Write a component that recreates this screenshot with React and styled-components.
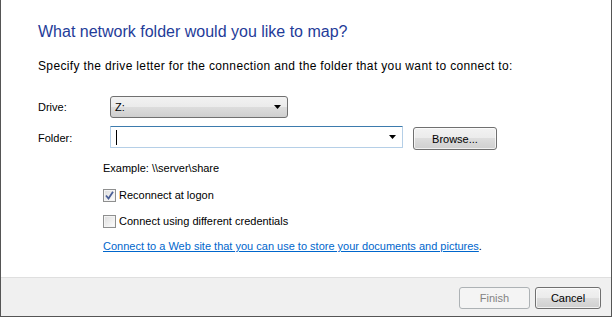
import React from "react"
import styled, { createGlobalStyle } from "styled-components"

const GlobalStyle = createGlobalStyle`
  html, body {
    margin: 0;
    padding: 0;
    background: #ffffff;
  }
  body {
    font-family: "Liberation Sans", Arial, sans-serif;
    font-size: 11px;
    color: #000000;
  }
`

const Dialog = styled.div`
  width: 612px;
  height: 317px;
  box-sizing: border-box;
  border-left: 1px solid #555555;
  border-right: 1px solid #555555;
  border-bottom: 1px solid #555555;
  display: flex;
  flex-direction: column;
  background: #ffffff;
`

const Content = styled.div`
  flex: 1;
  padding: 21px 0 0 37px;
  box-sizing: border-box;
`

const Title = styled.h1`
  margin: 0;
  font-size: 16px;
  line-height: 21px;
  font-weight: normal;
  color: #1f3c99;
`

const Intro = styled.p`
  margin: 17px 0 0;
  font-size: 12px;
  letter-spacing: 0.35px;
  line-height: 15px;
`

const Form = styled.div`
  margin-top: 22px;
  display: grid;
  grid-template-columns: 72px auto;
  row-gap: 8px;
  align-items: center;
`

const Label = styled.label`
  line-height: 15px;
`

const Field = styled.div`
  display: flex;
  align-items: flex-start;
  gap: 10px;
`

const Select = styled.div`
  width: ${p => p.$width}px;
  height: 22px;
  box-sizing: border-box;
  border: 1px solid ${p => (p.$editable ? "#3d7bad" : "#707070")};
  border-left-color: ${p => (p.$editable ? "#b5cfe7" : "#707070")};
  border-right-color: ${p => (p.$editable ? "#b5cfe7" : "#707070")};
  border-bottom-color: ${p => (p.$editable ? "#b5cfe7" : "#707070")};
  border-radius: ${p => (p.$editable ? "1px" : "3px")};
  background: ${p =>
    p.$editable
      ? "#ffffff"
      : "linear-gradient(to bottom, #f2f2f2 0%, #ebebeb 50%, #dddddd 50%, #cfcfcf 100%)"};
  display: flex;
  align-items: center;
  padding: 0 6px 0 4px;
`

const SelectValue = styled.span`
  flex: 1;
  line-height: 15px;
  display: flex;
  align-items: center;
`

const Caret = styled.span`
  display: inline-block;
  width: 1px;
  height: 15px;
  background: #000000;
  margin-left: 1px;
`

const Arrow = () => (
  <svg width="7" height="4" viewBox="0 0 7 4">
    <path d="M0 0 H7 L3.5 4 Z" fill="#000000" />
  </svg>
)

const Button = styled.button`
  width: ${p => p.$width}px;
  height: ${p => p.$height || 22}px;
  box-sizing: border-box;
  margin-top: ${p => p.$offset || 0}px;
  border: 1px solid ${p => (p.disabled ? "#adb2b5" : "#707070")};
  border-radius: 3px;
  background: ${p =>
    p.disabled
      ? "#f4f4f4"
      : "linear-gradient(to bottom, #f2f2f2 0%, #ebebeb 50%, #dddddd 50%, #cfcfcf 100%)"};
  box-shadow: inset 0 0 0 1px ${p => (p.disabled ? "#f4f4f4" : "rgba(255,255,255,0.7)")};
  font-family: "Liberation Sans", Arial, sans-serif;
  font-size: 11px;
  color: ${p => (p.disabled ? "#838383" : "#000000")};
  padding: 0;
`

const Options = styled.div`
  margin-left: 65px;
  margin-top: 11px;
  display: flex;
  flex-direction: column;
`

const Note = styled.div`
  line-height: 15px;
`

const CheckRow = styled.label`
  display: flex;
  align-items: center;
  gap: 3px;
  line-height: 15px;
  margin-top: ${p => p.$gap}px;
`

const Box = styled.span`
  width: 13px;
  height: 13px;
  box-sizing: border-box;
  border: 1px solid #8e8f8f;
  background: linear-gradient(135deg, #dcdcdc 0%, #f4f4f4 70%, #ffffff 100%);
  box-shadow: inset 0 0 0 1px #f4f4f4;
  display: flex;
  align-items: center;
  justify-content: center;
`

const Check = () => (
  <svg width="9" height="9" viewBox="0 0 9 9">
    <path d="M1 4.5 L3.5 7.5 L8 0.8" stroke="#4a5f97" strokeWidth="1.8" fill="none" />
  </svg>
)

const Checkbox = ({ checked, children, gap }) => (
  <CheckRow $gap={gap}>
    <Box>{checked && <Check />}</Box>
    {children}
  </CheckRow>
)

const LinkLine = styled.div`
  margin-top: 10px;
  line-height: 15px;
`

const Link = styled.a`
  color: #0066cc;
  text-decoration: underline;
  cursor: pointer;
`

const Footer = styled.div`
  height: 39px;
  box-sizing: border-box;
  border-top: 1px solid #dfdfdf;
  background: #f0f0f0;
  display: flex;
  justify-content: flex-end;
  align-items: flex-start;
  gap: 5px;
  padding: 9px 10px 0 0;
`

export default function App() {
  return (
    <>
      <GlobalStyle />
      <Dialog>
        <Content>
          <Title>What network folder would you like to map?</Title>
          <Intro>Specify the drive letter for the connection and the folder that you want to connect to:</Intro>
          <Form>
            <Label>Drive:</Label>
            <Field>
              <Select $width={178}>
                <SelectValue>Z:</SelectValue>
                <Arrow />
              </Select>
            </Field>
            <Label>Folder:</Label>
            <Field>
              <Select $width={293} $editable>
                <SelectValue><Caret /></SelectValue>
                <Arrow />
              </Select>
              <Button $width={84} $height={23} $offset={1}>Browse...</Button>
            </Field>
          </Form>
          <Options>
            <Note>Example: \\server\share</Note>
            <Checkbox checked gap={12}>Reconnect at logon</Checkbox>
            <Checkbox gap={11}>Connect using different credentials</Checkbox>
            <LinkLine>
              <Link>Connect to a Web site that you can use to store your documents and pictures</Link>.
            </LinkLine>
          </Options>
        </Content>
        <Footer>
          <Button $width={71} disabled>Finish</Button>
          <Button $width={66}>Cancel</Button>
        </Footer>
      </Dialog>
    </>
  )
}
